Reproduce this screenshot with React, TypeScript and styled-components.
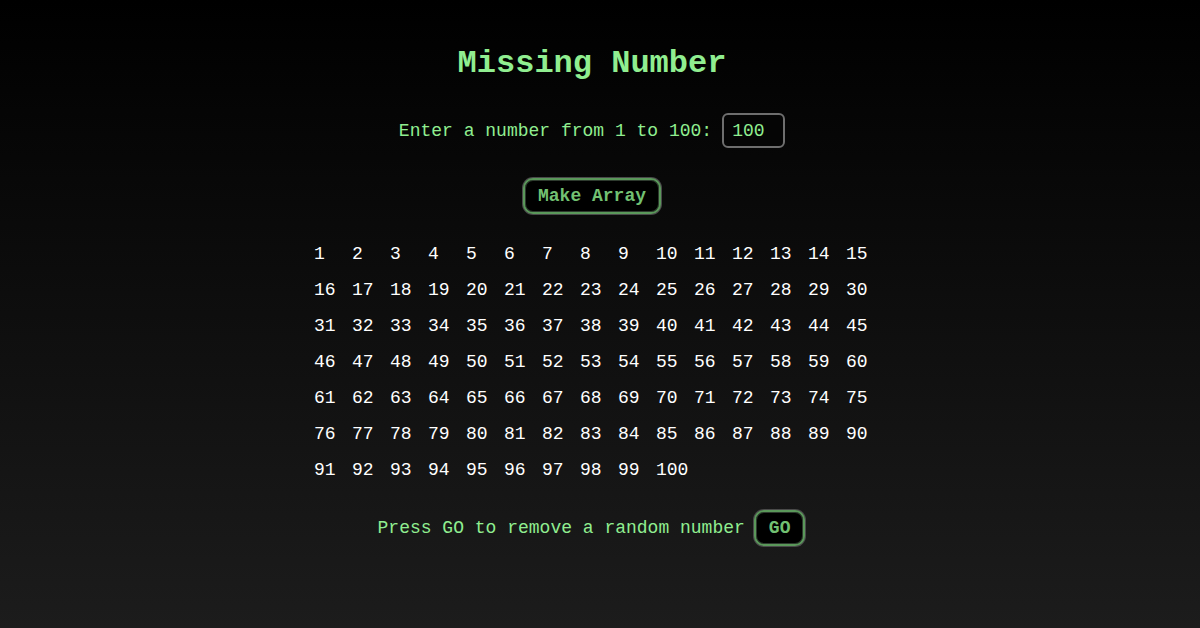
import React from "react";
import styled, { createGlobalStyle } from "styled-components";

const Global = createGlobalStyle`
  html, body { margin: 0; padding: 0; }
  body {
    min-height: 100vh;
    background: linear-gradient(to bottom, #000000, #1c1c1c);
    font-family: "Liberation Mono", "DejaVu Sans Mono", monospace;
  }
`;

const Page = styled.div`
  height: 628px;
  display: flex;
  flex-direction: column;
  align-items: center;
  box-sizing: border-box;
  padding: 46px 16px 0 0;
`;

const Title = styled.h1`
  margin: 0;
  font-size: 32px;
  line-height: 36px;
  font-weight: 700;
  color: #90ee90;
`;

const Row = styled.div<{ $mt: number; $gap?: number }>`
  display: flex;
  align-items: center;
  gap: ${(p) => p.$gap ?? 10}px;
  margin-top: ${(p) => p.$mt}px;
`;

const Label = styled.span`
  font-size: 18px;
  color: #90ee90;
`;

const Input = styled.input`
  box-sizing: border-box;
  width: 63px;
  height: 35px;
  padding: 0 8px;
  border: 2px solid #6e6e6e;
  border-radius: 6px;
  background: #050505;
  color: #90ee90;
  font-family: inherit;
  font-size: 18px;
  outline: none;
`;

const Button = styled.button`
  box-sizing: border-box;
  height: 36px;
  margin: 1px;
  padding: 0 13px;
  border: 2px solid #5a985a;
  box-shadow: 0 0 0 1px #4a4a4a, inset 0 0 0 1px #2e3a2e;
  border-radius: 10px;
  background: #000;
  color: #72c172;
  font-family: inherit;
  font-size: 18px;
  font-weight: 700;
  cursor: pointer;
`;

const Grid = styled.div`
  display: grid;
  grid-template-columns: repeat(15, 38px);
  grid-auto-rows: 36px;
  margin-top: 21px;
  padding-left: 14px;
`;

const Cell = styled.span`
  font-size: 18px;
  line-height: 36px;
  color: #ffffff;
`;

const nums = Array.from({ length: 100 }, (_, i) => i + 1);

export default function App() {
  return (
    <>
      <Global />
      <Page>
        <Title>Missing Number</Title>
        <Row $mt={31}>
          <Label>Enter a number from 1 to 100:</Label>
          <Input defaultValue="100" />
        </Row>
        <Row $mt={29}>
          <Button>Make Array</Button>
        </Row>
        <Grid>
          {nums.map((n) => (
            <Cell key={n}>{n}</Cell>
          ))}
        </Grid>
        <Row $mt={21} $gap={8}>
          <Label>Press GO to remove a random number</Label>
          <Button>GO</Button>
        </Row>
      </Page>
    </>
  );
}
